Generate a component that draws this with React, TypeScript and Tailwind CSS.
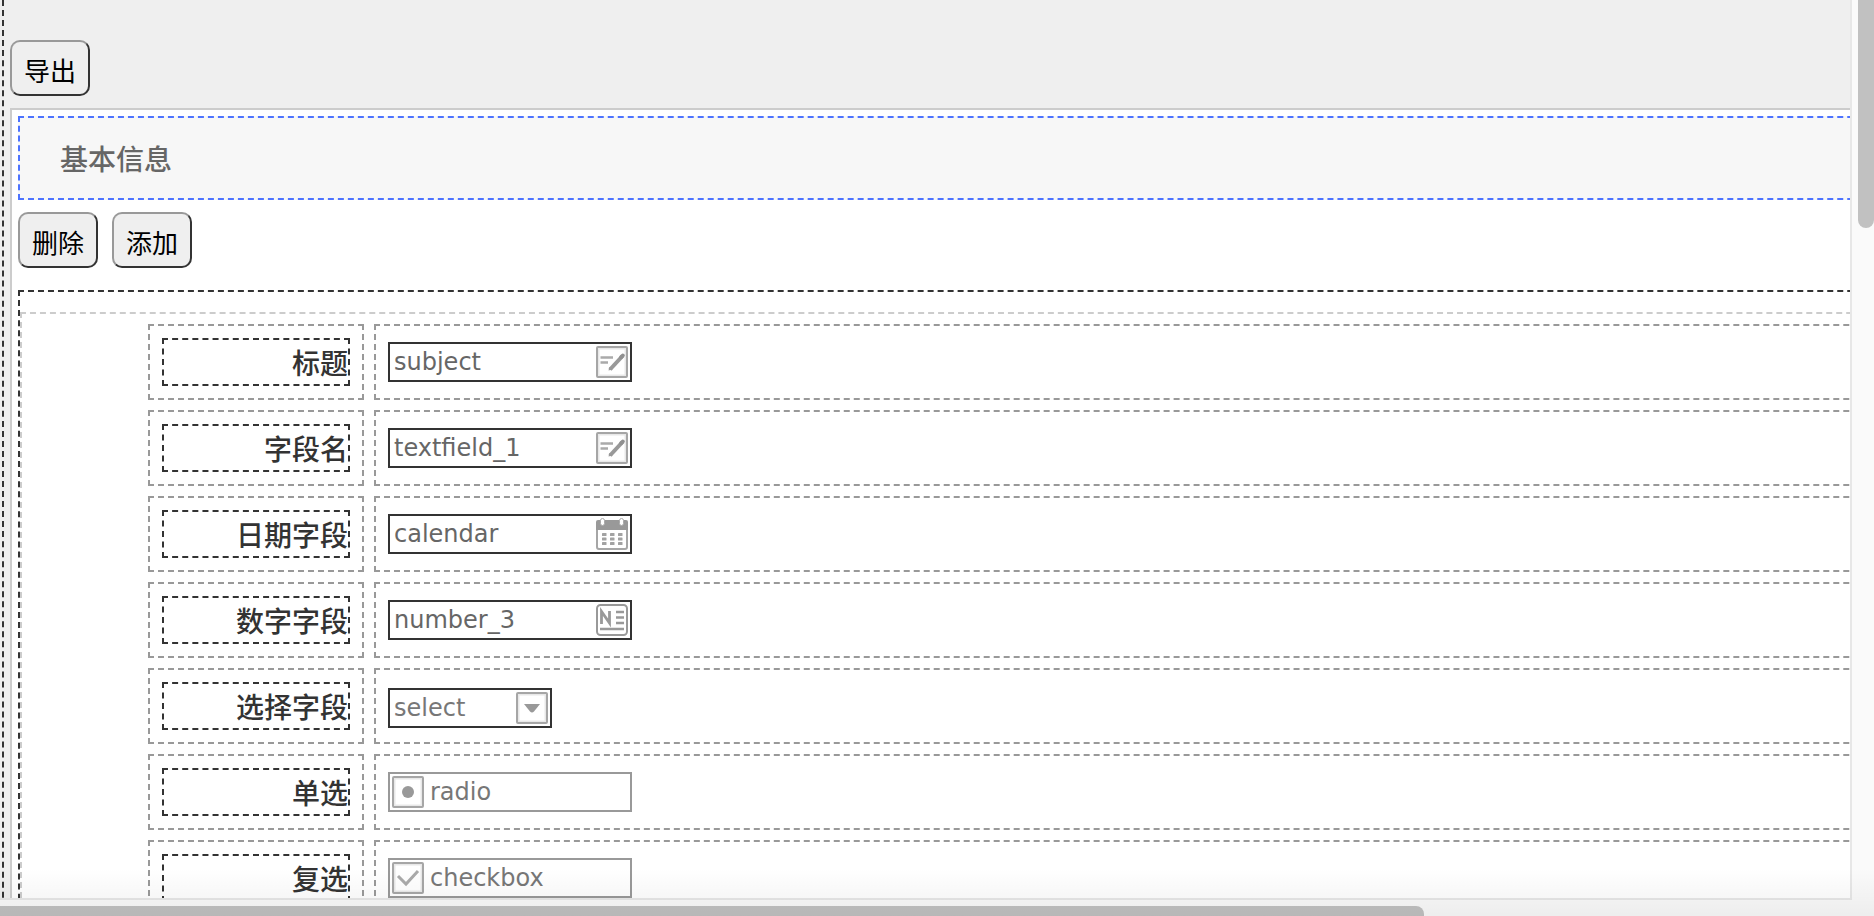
import type { ReactNode } from 'react';

const buttonClass =
  'h-14 rounded-[10px] border-2 border-t-[#999] border-l-[#999] border-r-[#333] border-b-[#333] bg-[#efefef] px-3 pt-1 text-[26px] leading-9 text-black';

const boxClass = 'flex h-10 items-center border-2 px-[2px]';

const textClass = "font-['DejaVu_Sans',sans-serif] text-2xl leading-8";

function Icon({ children }: { children: ReactNode }) {
  return (
    <svg aria-hidden="true" viewBox="0 0 32 32" className="size-8 shrink-0" fill="none">
      {children}
    </svg>
  );
}

function Frame() {
  return (
    <>
      <rect x="2.5" y="2.5" width="27" height="27" stroke="#e8e8e8" strokeWidth="2" />
      <rect x="1" y="1" width="30" height="30" rx="1" stroke="#a6a6a6" strokeWidth="2" />
    </>
  );
}

function EditIcon() {
  return (
    <Icon>
      <Frame />
      <path d="M4.5 11.5H17M4.5 16.5H12" stroke="#aaa" strokeWidth="2.4" />
      <path d="M14 23.5 26.5 10" stroke="#999" strokeWidth="4" />
      <path d="m12.5 24.5.8-3.6 3 2.7z" fill="#999" />
      <path d="m25.2 11.2 1.6-1.7" stroke="#909090" strokeWidth="4" strokeLinecap="round" />
    </Icon>
  );
}

function CalendarIcon() {
  return (
    <Icon>
      <path d="M1 6v23a2 2 0 0 0 2 2h26a2 2 0 0 0 2-2V6" stroke="#a6a6a6" strokeWidth="2" />
      <path d="M0 4a2 2 0 0 1 2-2h28a2 2 0 0 1 2 2v8H0z" fill="#999" />
      <rect x="4.5" y="0.5" width="4" height="7" rx="2" fill="#fff" stroke="#aaa" />
      <rect x="23.5" y="0.5" width="4" height="7" rx="2" fill="#fff" stroke="#aaa" />
      {[15, 19.5, 24].map((y) =>
        [6, 14, 22].map((x) => (
          <rect key={`${x}-${y}`} x={x} y={y} width="4.5" height="3" rx="0.6" fill="#a2a2a2" />
        )),
      )}
    </Icon>
  );
}

function NumberIcon() {
  return (
    <Icon>
      <rect x="1" y="1" width="30" height="30" rx="3.5" stroke="#999" strokeWidth="2" />
      <path d="M5.5 20V7.5L13.5 19V7" stroke="#999" strokeWidth="2.8" />
      <path d="M20 8h8M20 13.5h8M20 19h8M4 25h24" stroke="#999" strokeWidth="2.5" />
    </Icon>
  );
}

function Row({ label, id, children }: { label: string; id: string; children: ReactNode }) {
  return (
    <div className="flex gap-[10px]">
      <div className="h-[76px] w-[216px] shrink-0 border-2 border-dashed border-[#999] p-3">
        <label
          htmlFor={id}
          className="block h-12 border-2 border-dashed border-[#333] text-right text-[28px] leading-[44px] font-medium text-[#333]"
        >
          {label}
        </label>
      </div>
      <div className="flex h-[76px] flex-1 items-center border-2 border-dashed border-[#999] px-3">
        {children}
      </div>
    </div>
  );
}

function TextBox({ id, value, icon }: { id: string; value: string; icon: ReactNode }) {
  return (
    <div className={`${boxClass} w-[244px] border-[#333]`}>
      <input
        id={id}
        type="text"
        defaultValue={value}
        className={`${textClass} w-0 min-w-0 flex-1 pl-[2px] text-[#666] outline-none`}
      />
      {icon}
    </div>
  );
}

function ChoiceBox({ id, type, icon }: { id: string; type: 'radio' | 'checkbox'; icon: ReactNode }) {
  return (
    <label className={`${boxClass} w-[244px] gap-[6px] border-[#999]`}>
      <span className="grid size-8">
        <input id={id} type={type} className="col-start-1 row-start-1 size-8 appearance-none" />
        <span className="pointer-events-none col-start-1 row-start-1">{icon}</span>
      </span>
      <span className={`${textClass} text-[#777]`}>{type}</span>
    </label>
  );
}

export default function App() {
  return (
    <div className="relative grid h-screen grid-cols-[minmax(0,1fr)_22px] grid-rows-[minmax(0,1fr)_16px] overflow-hidden bg-[#fafafa] font-['Noto_Sans_CJK_SC',sans-serif]">
      <main className="overflow-hidden border-r-2 border-b-2 border-[#e7e7e7] bg-[#efefef] pl-[2px]">
        <div className="w-[132%] border-l-2 border-dashed border-[#333] pt-10 pl-[6px]">
          <button type="button" className={buttonClass}>
            导出
          </button>
          <section className="mt-3 border-2 border-[#ccc] bg-white p-[6px]">
            <h2 className="h-[84px] border-2 border-dashed border-[#4d73ff] bg-[#f7f7f7] pl-10 text-[28px] leading-[80px] font-medium text-[#666]">
              基本信息
            </h2>
            <div className="mt-3 flex gap-[14px]">
              <button type="button" className={buttonClass}>
                删除
              </button>
              <button type="button" className={buttonClass}>
                添加
              </button>
            </div>
            <div className="mt-[22px] border-2 border-dashed border-[#333] pt-5">
              <form className="flex flex-col gap-[10px] border-2 border-dashed border-[#ccc] pt-[10px] pb-10 pl-[126px]">
                <Row label="标题" id="subject">
                  <TextBox id="subject" value="subject" icon={<EditIcon />} />
                </Row>
                <Row label="字段名" id="textfield">
                  <TextBox id="textfield" value="textfield_1" icon={<EditIcon />} />
                </Row>
                <Row label="日期字段" id="calendar">
                  <TextBox id="calendar" value="calendar" icon={<CalendarIcon />} />
                </Row>
                <Row label="数字字段" id="number">
                  <TextBox id="number" value="number_3" icon={<NumberIcon />} />
                </Row>
                <Row label="选择字段" id="select">
                  <div className="grid pt-1">
                    <select
                      id="select"
                      className={`${textClass} col-start-1 row-start-1 h-10 w-[164px] appearance-none border-2 border-[#333] pl-1 text-[#777]`}
                    >
                      <option>select</option>
                    </select>
                    <span className="pointer-events-none col-start-1 row-start-1 self-center justify-self-end pr-1">
                      <Icon>
                        <Frame />
                        <path d="M8 12h16l-6 7.5q-2 2-4 0z" fill="#999" />
                      </Icon>
                    </span>
                  </div>
                </Row>
                <Row label="单选" id="radio">
                  <ChoiceBox
                    id="radio"
                    type="radio"
                    icon={
                      <Icon>
                        <Frame />
                        <circle cx="16" cy="16" r="6" fill="#999" />
                      </Icon>
                    }
                  />
                </Row>
                <Row label="复选" id="checkbox">
                  <ChoiceBox
                    id="checkbox"
                    type="checkbox"
                    icon={
                      <Icon>
                        <Frame />
                        <path d="m6 14 8 8L26 9" stroke="#aaa" strokeWidth="3" />
                      </Icon>
                    }
                  />
                </Row>
              </form>
            </div>
          </section>
        </div>
      </main>
      <div className="overflow-hidden pl-[6px]">
        <div className="h-[228px] rounded-b-lg bg-[#c1c1c1]" />
      </div>
      <div className="col-span-2 overflow-hidden pt-[6px]">
        <div className="h-4 w-[76%] rounded-tr-lg bg-[#c1c1c1]" />
      </div>
      <div className="pointer-events-none absolute inset-x-0 bottom-0 h-12 bg-linear-to-b from-black/0 to-black/5" />
    </div>
  );
}
